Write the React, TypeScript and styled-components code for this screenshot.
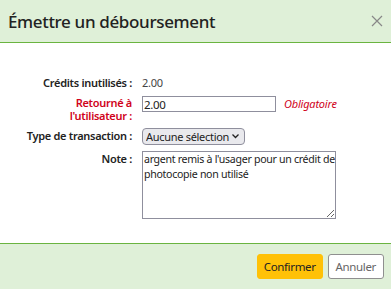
import styled, { createGlobalStyle } from "styled-components";

const Global = createGlobalStyle`
  html, body {
    margin: 0;
    padding: 0;
    background: #ffffff;
    font-family: "Noto Sans", "Open Sans", sans-serif;
    color: #212529;
  }
`;

const Modal = styled.div`
  width: 391px;
  height: 289px;
  display: flex;
  flex-direction: column;
  overflow: hidden;
`;

const Header = styled.div`
  height: 42px;
  background: #dff0d8;
  border-bottom: 1px solid #6ab440;
  display: flex;
  align-items: center;
  justify-content: space-between;
  padding: 0 7px 0 8px;
  flex-shrink: 0;
`;

const Title = styled.h2`
  margin: 0;
  font-size: 17px;
  font-weight: 500;
  color: #222;
  letter-spacing: -0.35px;
`;

const Close = styled.svg`
  width: 12px;
  height: 12px;
  margin-right: 1px;
`;

const Body = styled.div`
  flex: 1;
  padding: 32px 0 0;
`;

const Form = styled.div`
  display: grid;
  grid-template-columns: 132px 1fr;
  column-gap: 10px;
  row-gap: 6px;
  font-size: 11px;
  letter-spacing: -0.3px;
`;

const Label = styled.label<{ $required?: boolean }>`
  text-align: right;
  font-weight: 600;
  line-height: ${(p) => (p.$required ? "13px" : "14px")};
  padding-top: ${(p) => (p.$required ? "0" : "1px")};
  color: ${(p) => (p.$required ? "#d0021b" : "#222")};
`;

const Value = styled.div<{ $top?: boolean }>`
  display: flex;
  align-items: ${(p) => (p.$top ? "flex-start" : "center")};
  gap: 8px;
  color: #444;
`;

const Text = styled.span`
  line-height: 14px;
  padding-top: 1px;
`;

const Input = styled.input`
  width: 134px;
  height: 16px;
  box-sizing: border-box;
  border: 1px solid #8f8f9d;
  font: inherit;
  font-size: 11.5px;
  letter-spacing: -0.3px;
  padding: 0 1px;
  color: #222;
  outline: none;
`;

const Required = styled.span`
  color: #d0021b;
  font-style: italic;
  font-size: 11px;
  line-height: 16px;
  letter-spacing: -0.2px;
`;

const SelectWrap = styled.div`
  position: relative;
  width: 103px;
  height: 17px;
`;

const Select = styled.select`
  appearance: none;
  width: 103px;
  height: 17px;
  box-sizing: border-box;
  font: inherit;
  font-size: 11px;
  letter-spacing: -0.3px;
  border: 1px solid #8f8f9d;
  border-radius: 4px;
  background: #e9e9ed;
  color: #222;
  padding: 0 0 0 3px;
  outline: none;
`;

const Chevron = styled.svg`
  position: absolute;
  right: 6px;
  top: 6px;
  width: 7px;
  height: 5px;
  pointer-events: none;
`;

const Note = styled.textarea`
  width: 194px;
  height: 68px;
  box-sizing: border-box;
  font: inherit;
  font-size: 10.6px;
  letter-spacing: -0.3px;
  line-height: 15px;
  border: 1px solid #8f8f9d;
  padding: 0 0 0 1px;
  color: #222;
  resize: both;
  outline: none;
`;

const Footer = styled.div`
  height: 45px;
  border-top: 1px solid #6ab440;
  background: #dff0d8;
  display: flex;
  align-items: center;
  justify-content: flex-end;
  gap: 5px;
  padding: 0 7px 0 0;
  flex-shrink: 0;
`;

const Button = styled.button<{ $primary?: boolean }>`
  height: 25px;
  padding: 0 ${(p) => (p.$primary ? "6px" : "7px")};
  font: inherit;
  font-size: 11.5px;
  letter-spacing: -0.35px;
  border-radius: 3px;
  border: 1px solid ${(p) => (p.$primary ? "#ffc107" : "#8f8f8f")};
  background: ${(p) => (p.$primary ? "#ffc107" : "#ffffff")};
  color: ${(p) => (p.$primary ? "#222" : "#666")};
`;

export default function App() {
  return (
    <Modal>
      <Global />
      <Header>
        <Title>Émettre un déboursement</Title>
        <Close viewBox="0 0 12 12">
          <path d="M1 1 L11 11 M11 1 L1 11" stroke="#888" strokeWidth="1.2" fill="none" />
        </Close>
      </Header>
      <Body>
        <Form>
          <Label>Crédits inutilisés :</Label>
          <Value>
            <Text>2.00</Text>
          </Value>
          <Label $required>
            Retourné à<br />
            l'utilisateur :
          </Label>
          <Value $top>
            <Input defaultValue="2.00" />
            <Required>Obligatoire</Required>
          </Value>
          <Label>Type de transaction :</Label>
          <Value>
            <SelectWrap>
              <Select defaultValue="">
                <option value="">Aucune sélection</option>
              </Select>
              <Chevron viewBox="0 0 7 5">
                <path d="M0.5 0.5 L3.5 3.5 L6.5 0.5" stroke="#222" strokeWidth="1.3" fill="none" />
              </Chevron>
            </SelectWrap>
          </Value>
          <Label>Note :</Label>
          <Value $top>
            <Note defaultValue="argent remis à l'usager pour un crédit de photocopie non utilisé" />
          </Value>
        </Form>
      </Body>
      <Footer>
        <Button $primary>Confirmer</Button>
        <Button>Annuler</Button>
      </Footer>
    </Modal>
  );
}
